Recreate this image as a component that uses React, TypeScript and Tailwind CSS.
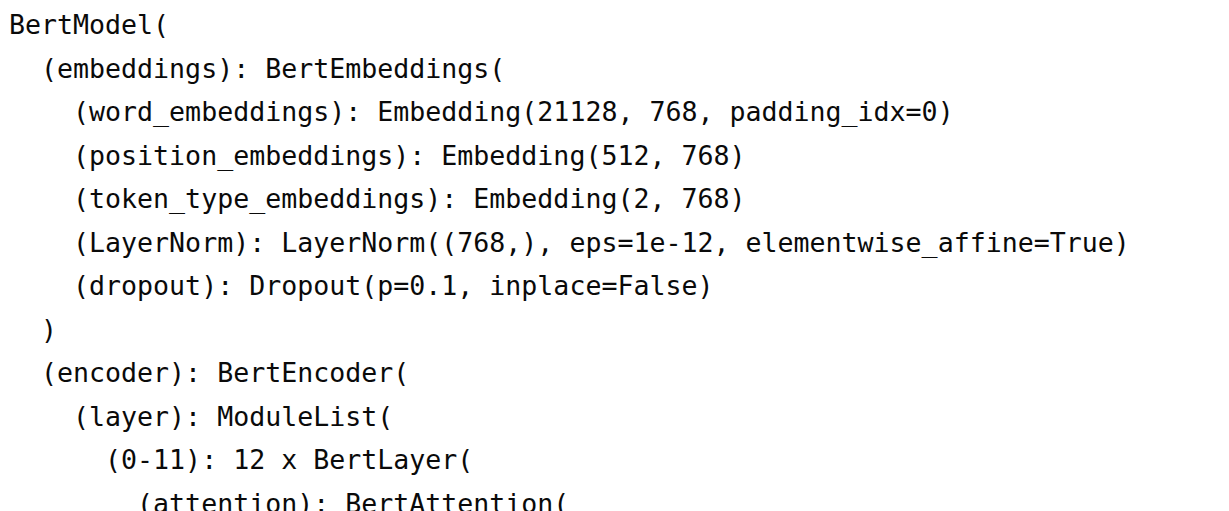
import React from "react";

const lines = [
  "BertModel(",
  "  (embeddings): BertEmbeddings(",
  "    (word_embeddings): Embedding(21128, 768, padding_idx=0)",
  "    (position_embeddings): Embedding(512, 768)",
  "    (token_type_embeddings): Embedding(2, 768)",
  "    (LayerNorm): LayerNorm((768,), eps=1e-12, elementwise_affine=True)",
  "    (dropout): Dropout(p=0.1, inplace=False)",
  "  )",
  "  (encoder): BertEncoder(",
  "    (layer): ModuleList(",
  "      (0-11): 12 x BertLayer(",
  "        (attention): BertAttention(",
];

export default function App() {
  return (
    <div className="w-[1229px] h-[511px] overflow-hidden bg-white">
      <pre
        className="m-0 pl-[9px] pt-[3px] text-[26.6px] leading-[43.5px] text-[#0a0a0a] whitespace-pre"
        style={{ fontFamily: '"DejaVu Sans Mono", "Liberation Mono", monospace' }}
      >
        {lines.map((l, i) => (
          <div key={i}>{l}</div>
        ))}
      </pre>
    </div>
  );
}
